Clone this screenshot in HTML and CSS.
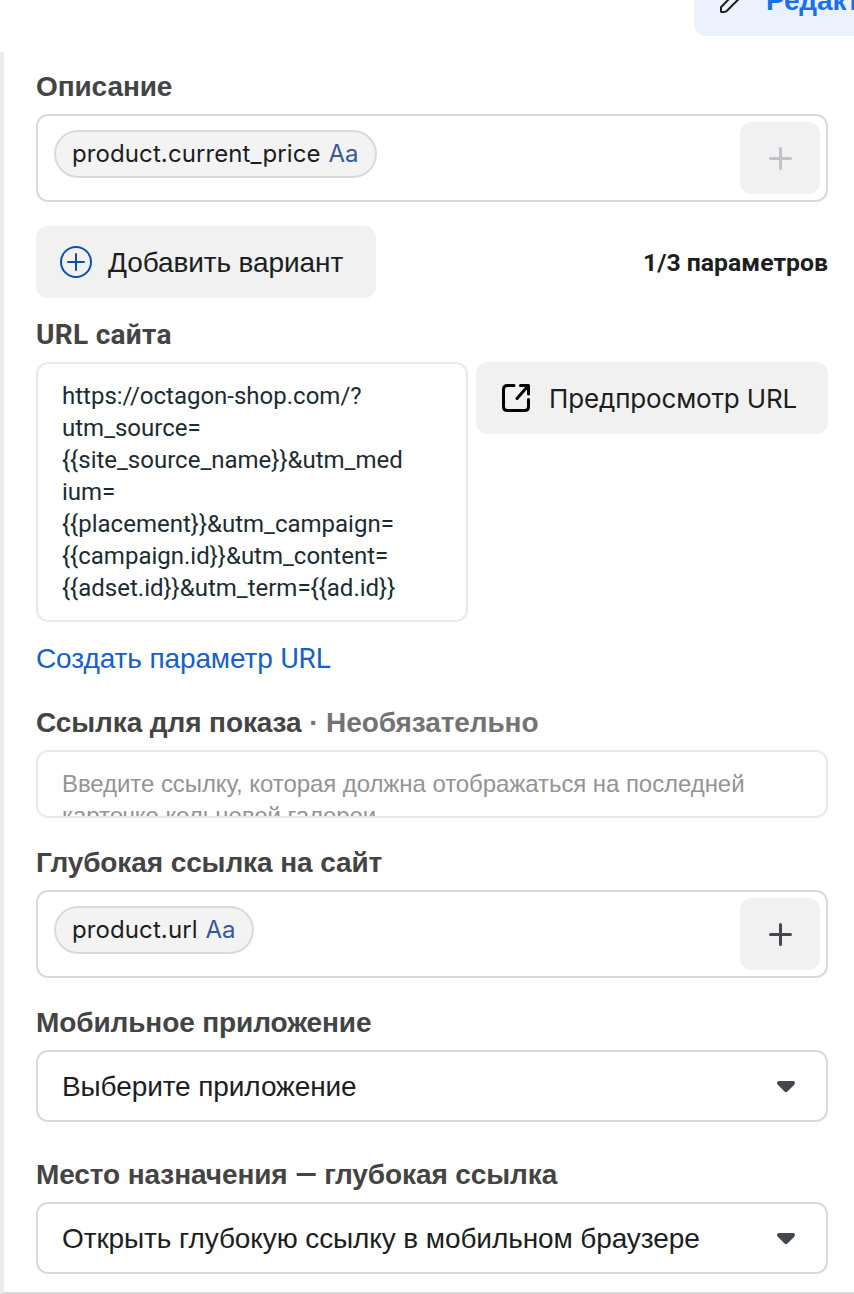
FILE: index.html
```html
<!DOCTYPE html>
<html lang="ru">
<head>
    <meta charset="UTF-8">
    <meta name="viewport" content="width=device-width, initial-scale=1.0">
    <title>Редактирование карточки</title>
    <link rel="stylesheet" href="styles.css">
</head>
<body>
    <div class="topbar">
        <button class="edit-button">
            <svg width="28" height="28" viewBox="0 0 28 28" fill="none" stroke="#1c1e21" stroke-width="2" stroke-linejoin="round">
                <path d="M3 26.600V22.200L19.500 5.200L24.500 10.200L9.400 25.300Q8 27 6 27H3.400Z"/>
            </svg>
            <span>Редактировать</span>
        </button>
    </div>

    <div class="panel">
        <label class="label">Описание</label>
        <div class="token-field">
            <span class="token">product.current_price <span class="token-type">Aa</span></span>
            <button class="add-button disabled">
                <svg width="24" height="24" viewBox="0 0 24 24" fill="none" stroke="currentColor" stroke-width="3" stroke-linecap="round">
                    <path d="M12.5 2.500v20M2.500 12.500h20"/>
                </svg>
            </button>
        </div>

        <div class="variant-row">
            <button class="button">
                <svg width="32" height="32" viewBox="0 0 32 32" fill="none" stroke="#0a4fb5" stroke-width="2" stroke-linecap="round">
                    <circle cx="16" cy="16" r="15"/>
                    <path d="M16 8v16M8 16h16"/>
                </svg>
                <span class="button-text">Добавить вариант</span>
            </button>
            <span class="counter">1/3 параметров</span>
        </div>

        <label class="label label-url">URL сайта</label>
        <div class="url-row">
            <div class="url-field">https://octagon-shop.com/?<br>utm_source=<br>{{site_source_name}}&amp;utm_med<br>ium=<br>{{placement}}&amp;utm_campaign=<br>{{campaign.id}}&amp;utm_content=<br>{{adset.id}}&amp;utm_term={{ad.id}}</div>
            <button class="button preview-button">
                <svg width="32" height="32" viewBox="0 0 32 32" fill="none" stroke="#000" stroke-width="3" stroke-linecap="round" stroke-linejoin="round">
                    <path d="M14 3.500H7.500Q3.500 3.500 3.500 7.500V24.500Q3.500 28.500 7.500 28.500H24.500Q28.500 28.500 28.500 24.500V17.500"/>
                    <path d="M20.500 3.500H28.500V12M28 4L17 16.500"/>
                </svg>
                <span>Предпросмотр URL</span>
            </button>
        </div>
        <a class="link">Создать параметр <span class="latin">URL</span></a>

        <label class="label label-display">Ссылка для показа <span class="optional">· Необязательно</span></label>
        <div class="display-field">Введите ссылку, которая должна отображаться на последней<br>карточке кольцевой галереи</div>

        <label class="label label-deep">Глубокая ссылка на сайт</label>
        <div class="token-field">
            <span class="token">product.url <span class="token-type">Aa</span></span>
            <button class="add-button">
                <svg width="24" height="24" viewBox="0 0 24 24" fill="none" stroke="currentColor" stroke-width="3" stroke-linecap="round">
                    <path d="M12.5 2.500v20M2.500 12.500h20"/>
                </svg>
            </button>
        </div>

        <label class="label label-app">Мобильное приложение</label>
        <div class="select">
            <span>Выберите приложение</span>
            <svg width="18" height="12" viewBox="0 0 18 12" fill="#444950">
                <path d="M2 0H16Q18 0 18 2Q18 3 17 4L10.500 10.500Q9 12 7.500 10.500L1 4Q0 3 0 2Q0 0 2 0Z"/>
            </svg>
        </div>

        <label class="label label-target">Место назначения <span class="latin">—</span> глубокая ссылка</label>
        <div class="select">
            <span>Открыть глубокую ссылку в мобильном браузере</span>
            <svg width="18" height="12" viewBox="0 0 18 12" fill="#444950">
                <path d="M2 0H16Q18 0 18 2Q18 3 17 4L10.500 10.500Q9 12 7.500 10.500L1 4Q0 3 0 2Q0 0 2 0Z"/>
            </svg>
        </div>
    </div>
</body>
</html>
```
FILE: styles.css
```css
* {
    box-sizing: border-box;
}
body {
    margin: 0;
    height: 1294px;
    overflow: hidden;
    background-color: #fff;
    font-family: "Liberation Sans", Arial, sans-serif;
    font-size: 28px;
    letter-spacing: -0.1px;
    color: #1c1e21;
}
button {
    border: none;
    padding: 0;
    font: inherit;
    letter-spacing: inherit;
    color: inherit;
    cursor: pointer;
}
svg {
    display: block;
    flex-shrink: 0;
}
.latin {
    font-family: Roboto, sans-serif;
}
.topbar {
    height: 52px;
    overflow: hidden;
    display: flex;
    align-items: flex-start;
    padding-left: 694px;
}
.edit-button {
    flex-shrink: 0;
    width: 300px;
    height: 72px;
    margin-top: -36px;
    padding: 2px 0 0 24px;
    display: flex;
    align-items: center;
    gap: 20px;
    border-radius: 12px;
    background-color: #ebf1fd;
    color: #1771ed;
    font-weight: bold;
}
.edit-button svg {
    margin-top: -4px;
}
.panel {
    height: 1242px;
    padding: 16px 26px 0 32px;
    border-left: 4px solid #ebebeb;
    border-bottom: 2px solid #dadada;
}
.label {
    display: block;
    height: 36px;
    margin-bottom: 10px;
    padding-top: 1px;
    line-height: 36px;
    font-weight: bold;
    color: #444;
    white-space: nowrap;
}
.optional {
    color: #737373;
}
.token-field {
    display: flex;
    justify-content: space-between;
    align-items: flex-start;
    height: 88px;
    padding: 6px 6px 6px 16px;
    border: 2px solid #dadada;
    border-radius: 12px;
}
.token {
    height: 48px;
    margin-top: 8px;
    padding: 0 16px;
    border: 2px solid #d9dbdb;
    border-radius: 24px;
    background-color: #f3f3f3;
    font-family: Inter, sans-serif;
    font-size: 24px;
    letter-spacing: 0.1px;
    line-height: 44px;
    white-space: nowrap;
}
.token-type {
    margin-left: 1px;
    color: #385898;
}
.add-button {
    display: flex;
    justify-content: center;
    align-items: center;
    width: 80px;
    height: 72px;
    border-radius: 12px;
    background-color: #f1f1f1;
    color: #444950;
}
.add-button.disabled {
    color: #bec3c9;
}
.variant-row {
    display: flex;
    justify-content: space-between;
    align-items: center;
    margin: 24px 0 18px;
}
.button {
    display: flex;
    align-items: center;
    gap: 16px;
    width: 340px;
    height: 72px;
    padding-left: 24px;
    border-radius: 12px;
    background-color: #f1f1f1;
    white-space: nowrap;
}
.button-text {
    padding-top: 2px;
}
.counter {
    font-family: Roboto, sans-serif;
    font-size: 24.8px;
    font-weight: bold;
    letter-spacing: 0;
}
.label-url {
    font-family: Roboto, sans-serif;
    letter-spacing: 0.3px;
}
.url-row {
    display: flex;
    align-items: flex-start;
    gap: 8px;
}
.url-field {
    width: 432px;
    height: 260px;
    padding: 16px 24px;
    border: 2px solid #e9e9e9;
    border-radius: 12px;
    font-family: Roboto, sans-serif;
    font-size: 24px;
    letter-spacing: 0;
    line-height: 32px;
    color: #1c2b33;
    white-space: nowrap;
}
.preview-button {
    width: 352px;
    gap: 17px;
    font-family: Inter, sans-serif;
    font-size: 26px;
    letter-spacing: -0.15px;
}
.link {
    display: block;
    height: 36px;
    margin-top: 19px;
    line-height: 36px;
    color: #1461cc;
}
.label-display {
    margin-top: 27px;
}
.display-field {
    height: 68px;
    padding: 16px 24px;
    overflow: hidden;
    border: 2px solid #e9e9e9;
    border-radius: 12px;
    font-size: 24px;
    letter-spacing: -0.07px;
    line-height: 32px;
    color: #929497;
    white-space: nowrap;
}
.label-deep, .label-app {
    margin-top: 26px;
}
.label-target {
    margin-top: 34px;
}
.select {
    display: flex;
    justify-content: space-between;
    align-items: center;
    height: 72px;
    padding: 2px 31px 0 24px;
    border: 2px solid #dadada;
    border-radius: 12px;
    white-space: nowrap;
}
```
